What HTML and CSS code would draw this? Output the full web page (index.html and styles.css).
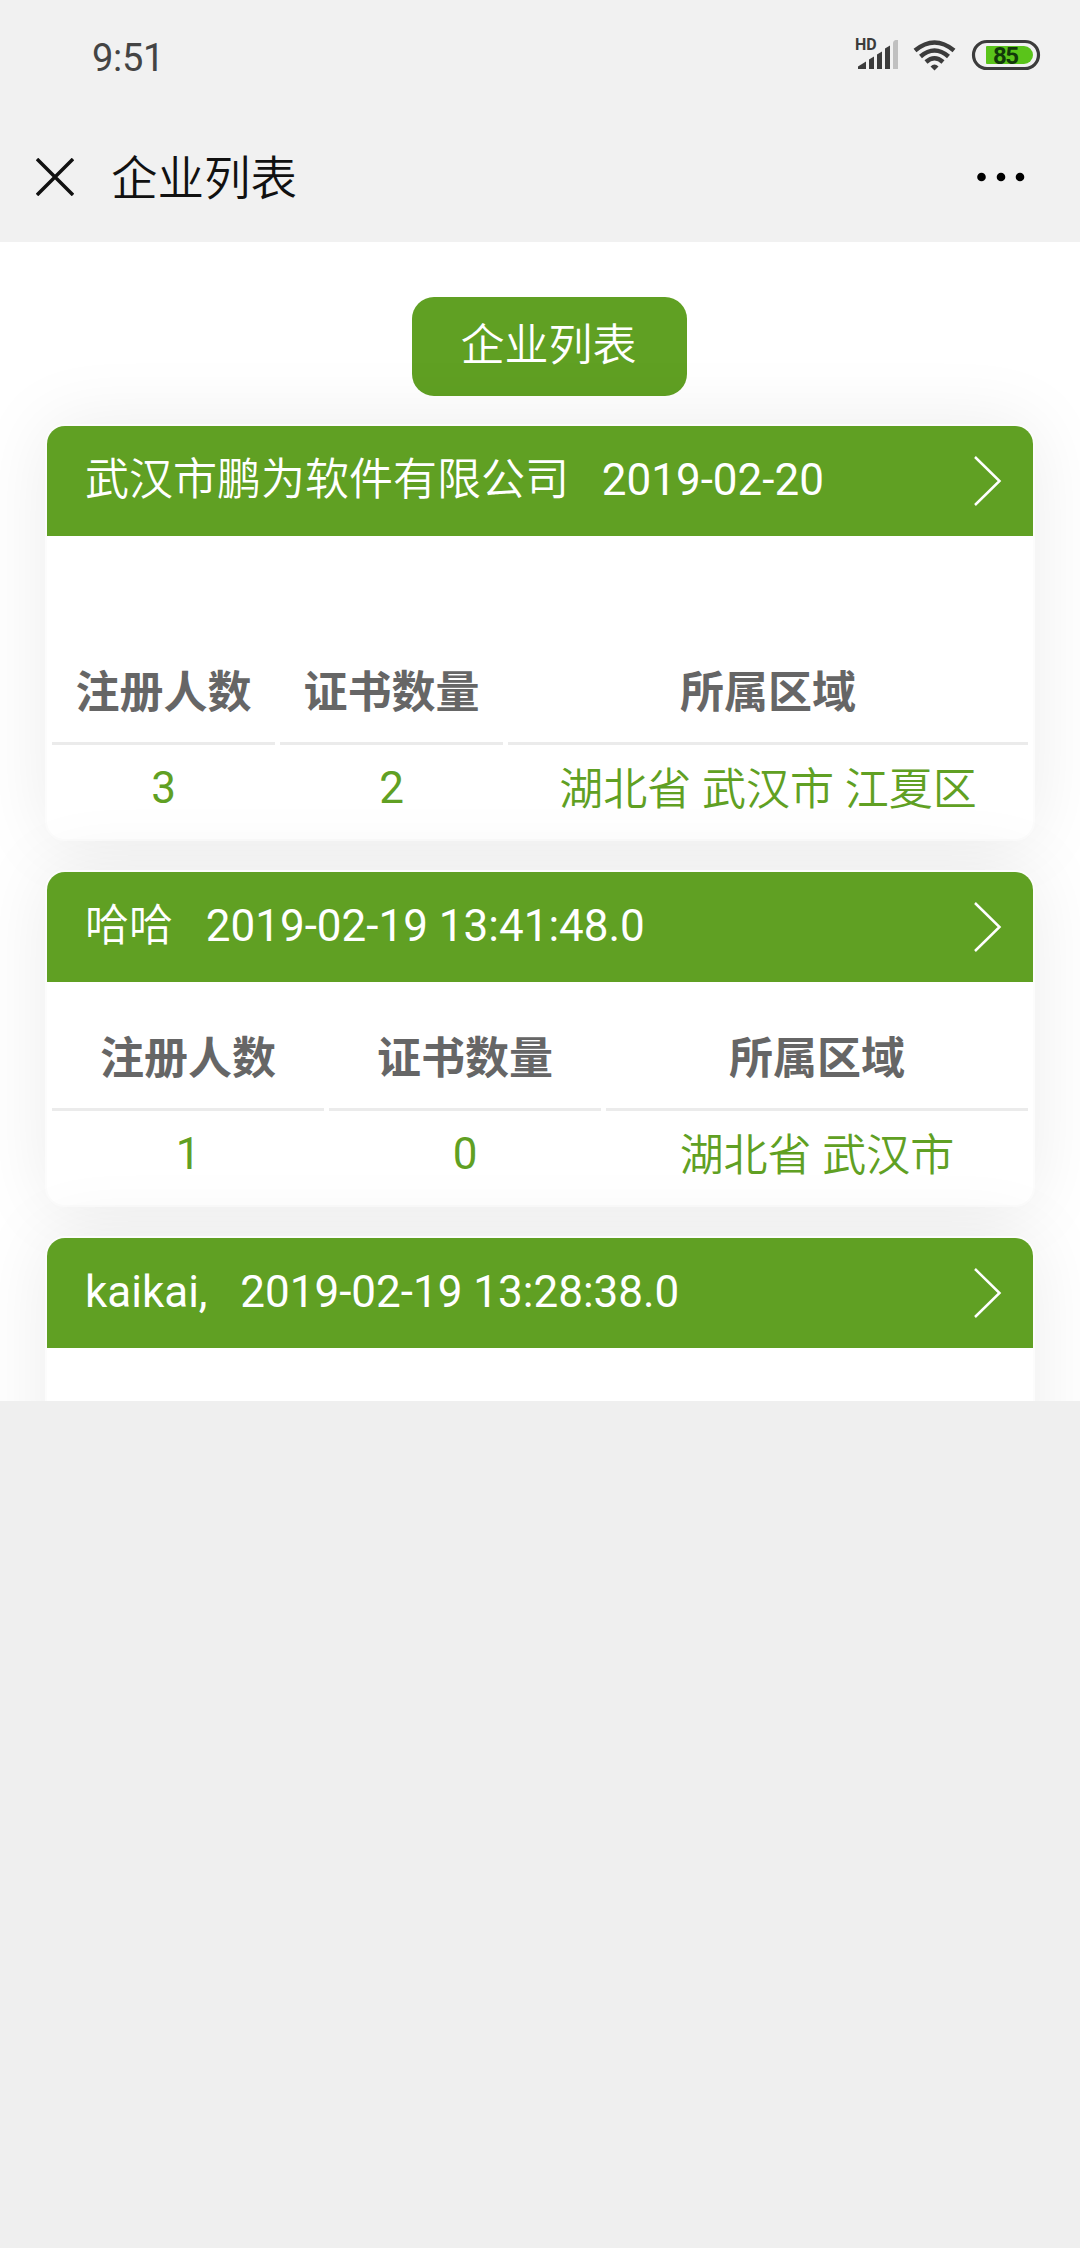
FILE: index.html
```html
<!DOCTYPE html>
<html lang="zh-CN">
<head>
  <meta charset="UTF-8" />
  <meta name="viewport" content="width=device-width, initial-scale=1" />
  <title>企业列表</title>
  <link rel="stylesheet" href="styles.css">
</head>
<body>
  <header class="top">
    <div class="status">
      <span class="clock">9:51</span>
      <svg class="status-icons" width="190" height="40" viewBox="0 0 190 40">
        <!-- signal -->
        <text class="hd" x="0" y="15">HD</text>
        <g fill="#3c3c3c">
          <path d="M3 34v-2.500L11 26.500v7.500z" />
          <path d="M14 34V24.500L19 21.500V34z" />
          <path d="M22 34V19.500L27 16.500V34z" />
          <path d="M30 34V13.500L35 10.500V34z" />
        </g>
        <path d="M38 34V8.500q0-3 2.500-3.500H43v29z" fill="#c0c0c0" />
        <!-- wifi -->
        <g fill="none" stroke="#3c3c3c" stroke-width="4.500">
          <path d="M60 15.500q19.500-16 39 0" />
          <path d="M65.500 21.500q14-12 28 0" />
          <path d="M71 27q8.500-7.500 17 0" />
        </g>
        <path d="M75.500 31.500q4-3.800 8 0L79.500 35.500z" fill="#3c3c3c" />
        <!-- battery -->
        <rect x="118.500" y="6.500" width="65" height="27" rx="13.500" fill="none" stroke="#3c3c3c" stroke-width="3.200" />
        <path d="M132 11h37a9 9 0 0 1 0 18h-37q-1 0-1-1V12q0-1 1-1z" fill="#5ac41a" />
        <text class="level" x="138" y="28.500" textLength="26">85</text>
      </svg>
    </div>
    <div class="navbar">
      <svg class="close" width="38" height="38" viewBox="0 0 38 38">
        <path d="M1 1l36 36M37 1L1 37" stroke="#111" stroke-width="3.500" />
      </svg>
      <h1>企业列表</h1>
      <svg class="more" width="50" height="10" viewBox="0 0 50 10">
        <circle cx="5.500" cy="5" r="4.300" />
        <circle cx="25" cy="5" r="4.300" />
        <circle cx="44" cy="5" r="4.300" />
      </svg>
    </div>
  </header>

  <main class="page">
    <button class="title-btn">企业列表</button>

    <section class="card">
      <div class="card-head">
        <span><b>武汉市鹏为软件有限公司</b>&nbsp;&nbsp;&nbsp;2019-02-20</span>
        <svg class="arrow" width="30" height="52" viewBox="0 0 30 52">
          <path d="M2 2l24.500 24L2 50" />
        </svg>
      </div>
      <table class="info info-tall">
        <colgroup><col class="narrow"><col class="narrow"><col></colgroup>
        <tr><th>注册人数</th><th>证书数量</th><th>所属区域</th></tr>
        <tr><td>3</td><td>2</td><td class="area">湖北省 武汉市 江夏区</td></tr>
      </table>
    </section>

    <section class="card">
      <div class="card-head">
        <span><b>哈哈</b>&nbsp;&nbsp;&nbsp;2019-02-19 13:41:48.0</span>
        <svg class="arrow" width="30" height="52" viewBox="0 0 30 52">
          <path d="M2 2l24.500 24L2 50" />
        </svg>
      </div>
      <table class="info">
        <colgroup><col class="wide"><col class="wide"><col></colgroup>
        <tr><th>注册人数</th><th>证书数量</th><th>所属区域</th></tr>
        <tr><td>1</td><td>0</td><td class="area">湖北省 武汉市</td></tr>
      </table>
    </section>

    <section class="card">
      <div class="card-head">
        <span>kaikai,&nbsp;&nbsp;&nbsp;2019-02-19 13:28:38.0</span>
        <svg class="arrow" width="30" height="52" viewBox="0 0 30 52">
          <path d="M2 2l24.500 24L2 50" />
        </svg>
      </div>
      <table class="info info-last">
        <colgroup><col class="mid"><col class="mid-wide"><col></colgroup>
        <tr><th>注册人数</th><th>证书数量</th><th>所属区域</th></tr>
      </table>
    </section>
  </main>
</body>
</html>
```
FILE: styles.css
```css
* {
  box-sizing: border-box;
}

body {
  margin: 0;
  height: 2248px;
  overflow: hidden;
  background-color: #efefef;
  font-family: Roboto, "Noto Sans CJK SC", sans-serif;
  font-size: 44px;
}

.top {
  height: 242px;
  background-color: #f1f1f1;
}

.status {
  display: flex;
  justify-content: space-between;
  height: 112px;
  padding: 36px 35px 0 92px;
}

.status-icons {
  margin-top: -1px;
}

.clock {
  font-size: 38px;
  line-height: 44px;
  letter-spacing: -0.300px;
  color: #444;
}

.hd {
  font-size: 16px;
  font-weight: 700;
  fill: #3c3c3c;
}

.level {
  font-size: 24px;
  font-weight: 700;
  fill: #12380a;
}

.navbar {
  display: flex;
  align-items: center;
  height: 129px;
  padding: 0 54px 0 36px;
}

.navbar h1 {
  flex: 1;
  margin: 0 0 4px 37px;
  font-family: "Noto Sans CJK SC DemiLight", "Noto Sans CJK SC", sans-serif;
  font-size: 46.500px;
  font-weight: 350;
  line-height: 60px;
  color: #111;
}

.page {
  height: 1159px;
  overflow: hidden;
  padding: 55px 45px 0 45px;
  background-color: #fff;
}

.title-btn {
  display: block;
  width: 275px;
  height: 99px;
  margin: 0 auto 28px 367px;
  padding: 0 2px 9px 0;
  border: none;
  border-radius: 22px;
  background-color: #60a023;
  color: #fff;
  font-family: inherit;
  font-size: 44px;
  font-weight: 350;
}

.card {
  margin-bottom: 29px;
  border: 2px solid #fcfcfc;
  border-radius: 20px;
  background-color: #fff;
  box-shadow: 0 0 76px rgba(0, 0, 0, 0.08);
}

.card-head {
  display: flex;
  align-items: center;
  justify-content: space-between;
  height: 110px;
  padding: 0 30px 0 38px;
  border-radius: 18px 18px 0 0;
  background-color: #60a023;
  color: #fff;
}

.card-head span {
  line-height: 52px;
  padding-bottom: 3px;
}

.card-head b {
  font-weight: 350;
}

.arrow path {
  fill: none;
  stroke: #fff;
  stroke-width: 2.500;
}

.info {
  width: 100%;
  table-layout: fixed;
  border-collapse: separate;
  border-spacing: 5.500px;
}

.info-tall {
  padding-top: 80px;
}

.info-last {
  padding-top: 3px;
}

.narrow {
  width: 223px;
}

.wide {
  width: 272px;
}

.mid {
  width: 266px;
}

.mid-wide {
  width: 279px;
}

th, td {
  padding: 0;
  text-align: center;
}

th {
  height: 124px;
  padding-top: 14px;
  border-bottom: 3px solid #ebebeb;
  color: #666;
  font-weight: 700;
}

td {
  height: 84px;
  padding-bottom: 8px;
  color: #60a023;
}

.area {
  padding-bottom: 13px;
  font-weight: 350;
}
```
